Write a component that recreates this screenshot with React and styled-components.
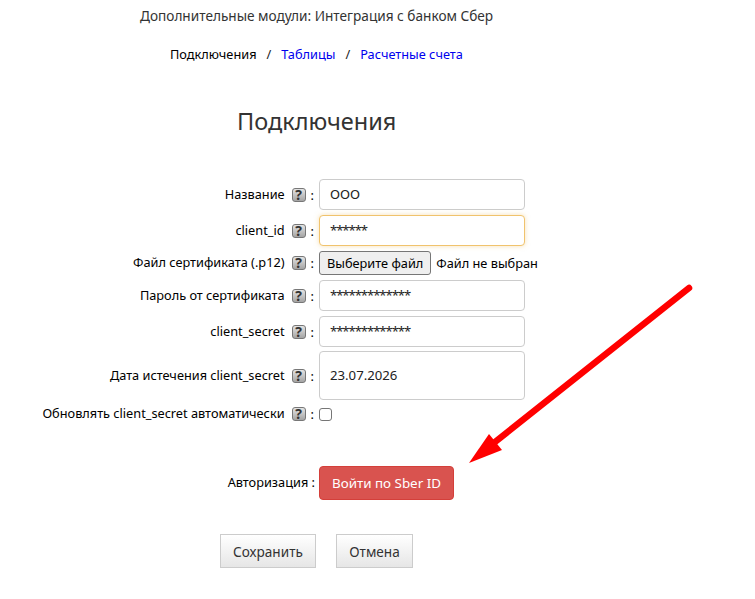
import React from 'react';
import styled, { createGlobalStyle } from 'styled-components';

const GlobalStyle = createGlobalStyle`
  html, body {
    margin: 0;
    padding: 0;
    background: #fff;
  }
  body {
    font-family: "Noto Sans", "Open Sans", sans-serif;
    font-size: 12.75px;
    color: #000;
  }
`;

const Page = styled.div`
  position: relative;
  width: 755px;
  height: 599px;
  overflow: hidden;
`;

const ModuleTitle = styled.div`
  padding: 6px 0 0 140px;
  height: 19px;
  line-height: 19px;
  font-size: 13.63px;
  color: #333;
`;

const Breadcrumbs = styled.nav`
  display: flex;
  align-items: center;
  margin-top: 20px;
  padding-left: 170px;
  height: 19px;
  line-height: 19px;
`;

const Crumb = styled.span`
  color: ${props => props.current ? '#000' : '#0000ee'};
`;

const CrumbSeparator = styled.span`
  margin: 0 10px;
  color: #222;
`;

const Heading = styled.h1`
  margin: 41px 0 0;
  padding-left: 237px;
  height: 33px;
  line-height: 33px;
  font-size: 23.5px;
  font-weight: 400;
  color: #333;
`;

const Form = styled.form`
  display: flex;
  flex-direction: column;
  margin-top: 41px;
`;

const Row = styled.div`
  display: grid;
  grid-template-columns: 315px 1fr;
  column-gap: 4px;
  align-items: center;
  margin-bottom: ${props => props.gap || 5}px;
`;

const LabelCell = styled.label`
  display: flex;
  justify-content: flex-end;
  align-items: center;
  gap: 7px;
  color: #000;
`;

const LabelText = styled.span`
  padding-bottom: 2px;
`;

const HelpWrap = styled.span`
  display: inline-flex;
  align-items: center;
  gap: 5px;
  margin-right: 1px;
`;

const HelpBox = styled.span`
  display: inline-flex;
  align-items: center;
  justify-content: center;
  box-sizing: border-box;
  width: 14px;
  height: 14px;
  border: 1px solid #777;
  border-radius: 3px;
  background: linear-gradient(#e4e4e4, #a4a4a4);
  color: #333;
  font-size: 14px;
  font-weight: 700;
  line-height: 1;
`;

const TextInput = styled.div`
  box-sizing: border-box;
  display: flex;
  align-items: center;
  width: 206px;
  height: ${props => props.tall ? 49 : 31}px;
  padding: 0 10px 2px;
  background: #fff;
  border: 1px solid ${props => props.focused ? '#f0c36d' : '#ccc'};
  border-radius: 4px;
  box-shadow: ${props => props.focused ? '0 0 5px rgba(240, 195, 109, 0.5)' : 'none'};
  font-size: 13.2px;
  letter-spacing: ${props => props.masked ? '-1.1px' : '0'};
  color: #222;
`;

const FileRow = styled.div`
  display: flex;
  align-items: center;
  gap: 5px;
`;

const FileButton = styled.button`
  box-sizing: border-box;
  height: 24px;
  padding: 0 7px;
  background: #efefef;
  border: 1px solid #767676;
  border-radius: 3px;
  font: inherit;
  color: #000;
`;

const CheckBox = styled.span`
  display: block;
  box-sizing: border-box;
  width: 13px;
  height: 13px;
  background: #fff;
  border: 1px solid #767676;
  border-radius: 3px;
`;

const SberButton = styled.button`
  box-sizing: border-box;
  width: 135px;
  height: 34px;
  background: #d9534f;
  border: 1px solid #d43f3a;
  border-radius: 4px;
  font: inherit;
  font-size: 13.4px;
  color: #fff;
`;

const Actions = styled.div`
  display: flex;
  gap: 20px;
  margin-top: 29px;
  padding-left: 220px;
`;

const ActionButton = styled.button`
  box-sizing: border-box;
  height: 34px;
  width: ${props => props.width}px;
  padding: 0;
  background: linear-gradient(#fff, #e6e6e6);
  border: 1px solid #ccc;
  font: inherit;
  font-size: 13.6px;
  color: #333;
`;

const ArrowSvg = styled.svg`
  position: absolute;
  top: 280px;
  left: 465px;
`;

function Help() {
  return (
    <HelpWrap>
      <HelpBox>?</HelpBox>
      <span>:</span>
    </HelpWrap>
  );
}

function Arrow() {
  return (
    <ArrowSvg width="235" height="190" viewBox="0 0 235 190">
      <line x1="224" y1="8" x2="30" y2="162" stroke="#ff0000" strokeWidth="6.5" strokeLinecap="round" />
      <polygon points="4,183 24,154 37,170" fill="#ff0000" />
    </ArrowSvg>
  );
}

function Field({ label, children, gap }) {
  return (
    <Row gap={gap}>
      <LabelCell>
        <LabelText>{label}</LabelText>
        <Help />
      </LabelCell>
      {children}
    </Row>
  );
}

export default function App() {
  return (
    <Page>
      <GlobalStyle />
      <ModuleTitle>Дополнительные модули: Интеграция с банком Сбер</ModuleTitle>
      <Breadcrumbs>
        <Crumb current>Подключения</Crumb>
        <CrumbSeparator>/</CrumbSeparator>
        <Crumb>Таблицы</Crumb>
        <CrumbSeparator>/</CrumbSeparator>
        <Crumb>Расчетные счета</Crumb>
      </Breadcrumbs>
      <Heading>Подключения</Heading>
      <Form>
        <Field label="Название"><TextInput>ООО</TextInput></Field>
        <Field label="client_id"><TextInput focused masked>******</TextInput></Field>
        <Field label="Файл сертификата (.p12)">
          <FileRow>
            <FileButton type="button">Выберите файл</FileButton>
            <span>Файл не выбран</span>
          </FileRow>
        </Field>
        <Field label="Пароль от сертификата"><TextInput masked>*************</TextInput></Field>
        <Field label="client_secret" gap={4}><TextInput masked>*************</TextInput></Field>
        <Field label="Дата истечения client_secret" gap={4}><TextInput tall>23.07.2026</TextInput></Field>
        <Field label="Обновлять client_secret автоматически" gap={42}><CheckBox /></Field>
        <Row>
          <LabelCell><LabelText>Авторизация :</LabelText></LabelCell>
          <SberButton type="button">Войти по Sber ID</SberButton>
        </Row>
      </Form>
      <Actions>
        <ActionButton type="button" width={96}>Сохранить</ActionButton>
        <ActionButton type="button" width={77}>Отмена</ActionButton>
      </Actions>
      <Arrow />
    </Page>
  );
}
